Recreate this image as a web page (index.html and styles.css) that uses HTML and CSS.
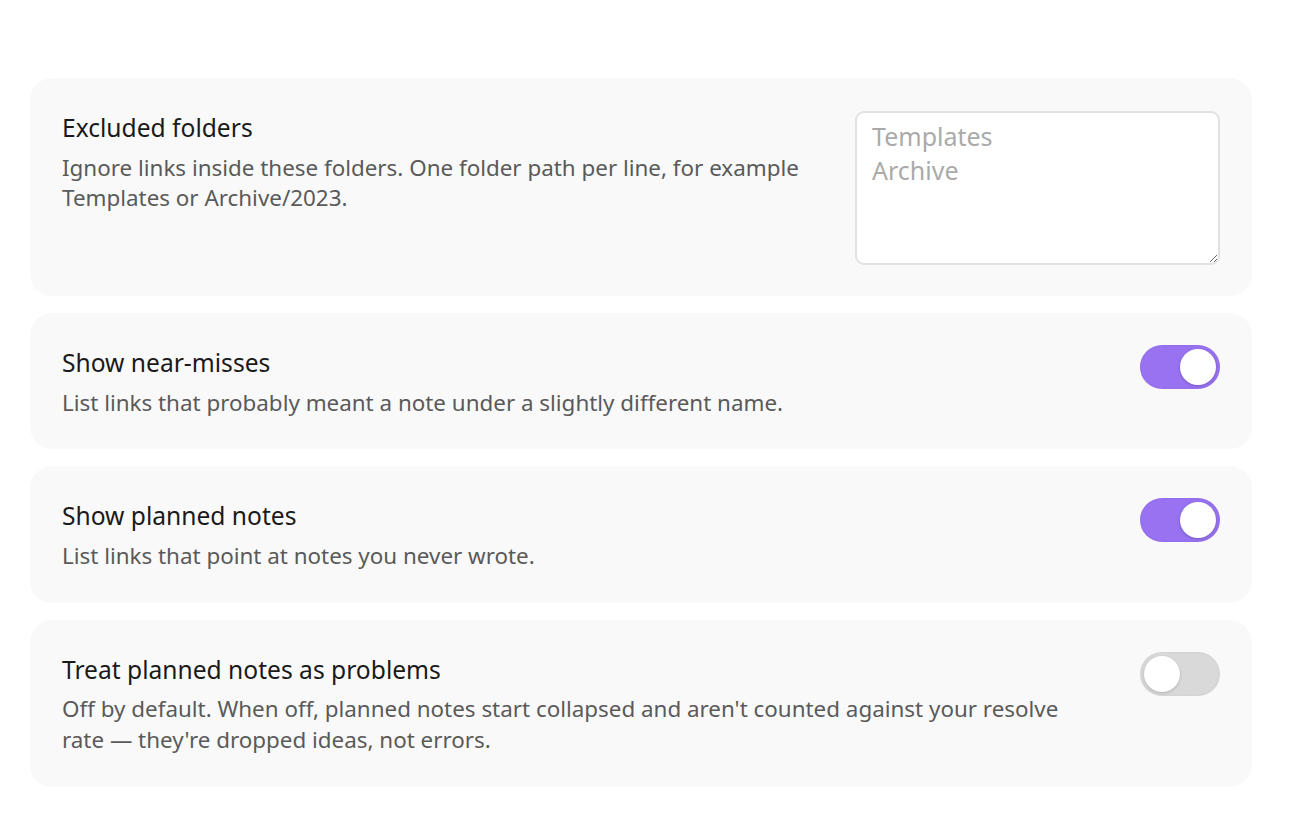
FILE: index.html
```html
<!DOCTYPE html>
<html lang="en">
<head>
<meta charset="utf-8">
<title>Settings</title>
<link rel="stylesheet" href="styles.css">
</head>
<body>
<main class="settings">
  <section class="card">
    <div class="text">
      <div class="title">Excluded folders</div>
      <div class="desc">Ignore links inside these folders. One folder path per line, for example Templates or Archive/2023.</div>
    </div>
    <textarea class="folders" placeholder="Templates&#10;Archive"></textarea>
  </section>
  <section class="card">
    <div class="text">
      <div class="title">Show near-misses</div>
      <div class="desc">List links that probably meant a note under a slightly different name.</div>
    </div>
    <div class="toggle on"><span class="knob"></span></div>
  </section>
  <section class="card">
    <div class="text">
      <div class="title">Show planned notes</div>
      <div class="desc">List links that point at notes you never wrote.</div>
    </div>
    <div class="toggle on"><span class="knob"></span></div>
  </section>
  <section class="card">
    <div class="text">
      <div class="title">Treat planned notes as problems</div>
      <div class="desc">Off by default. When off, planned notes start collapsed and aren't counted against your resolve rate — they're dropped ideas, not errors.</div>
    </div>
    <div class="toggle"><span class="knob"></span></div>
  </section>
</main>
</body>
</html>
```

FILE: styles.css
```css
html, body {
  margin: 0;
  padding: 0;
  background: #ffffff;
}
body {
  font-family: "Noto Sans", "Open Sans", sans-serif;
}
.settings {
  display: flex;
  flex-direction: column;
  gap: 17px;
  padding: 78px 38px 40px 30px;
}
.card {
  background: #f9f9f9;
  border-radius: 22px;
  padding: 33px 32px 31px;
  display: flex;
  align-items: flex-start;
  gap: 32px;
}
.text {
  flex: 1;
  min-width: 0;
}
.title {
  font-size: 24.6px;
  line-height: 34px;
  color: #1a1a1a;
}
.desc {
  margin-top: 7.5px;
  font-size: 22.4px;
  line-height: 30.8px;
  color: #5a5a5a;
  max-width: 1020px;
}
.folders {
  display: block;
  width: 365px;
  height: 154px;
  box-sizing: border-box;
  border: 2px solid #e2e2e2;
  border-radius: 9px;
  background: #fff;
  padding: 6px 15px;
  font-family: inherit;
  font-size: 25px;
  line-height: 34px;
  color: #333;
  outline: none;
  resize: vertical;
}
.folders::placeholder {
  color: #aaaaaa;
}
.toggle {
  flex: none;
  width: 80px;
  height: 44px;
  margin-top: -1px;
  border-radius: 22px;
  background: #d9d9d9;
  box-shadow: inset 0 0 3px rgba(0,0,0,0.06);
  display: flex;
  align-items: center;
  padding: 0 4px;
  box-sizing: border-box;
}
.toggle.on {
  background: #9872f0;
  justify-content: flex-end;
}
.knob {
  width: 36px;
  height: 36px;
  border-radius: 50%;
  background: #fff;
  box-shadow: 0 1px 3px rgba(0,0,0,0.2);
}
```
